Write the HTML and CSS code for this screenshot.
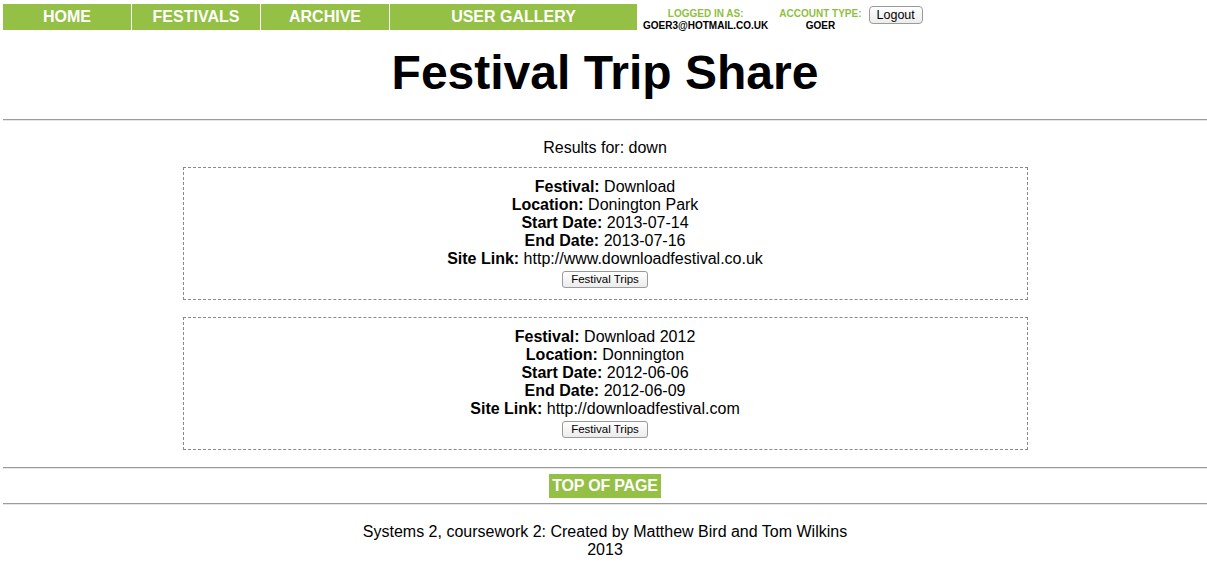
FILE: index.html
```html
<!DOCTYPE html>
<html>
<head>
<meta charset="utf-8">
<title>Festival Trip Share</title>
<link rel="stylesheet" href="styles.css">
</head>
<body>
<div class="header">
  <nav class="nav">
    <a class="nav-item w128" href="#">HOME</a>
    <a class="nav-item w128" href="#">FESTIVALS</a>
    <a class="nav-item w128" href="#">ARCHIVE</a>
    <a class="nav-item w247" href="#">USER GALLERY</a>
  </nav>
  <div class="info info-login">
    <div class="info-label">LOGGED IN AS:</div>
    <div class="info-value">GOER3@HOTMAIL.CO.UK</div>
  </div>
  <div class="info info-type">
    <div class="info-label">ACCOUNT TYPE:</div>
    <div class="info-value">GOER</div>
  </div>
  <button class="logout">Logout</button>
</div>

<h1 class="title">Festival Trip Share</h1>
<hr class="rule rule-top">

<p class="results">Results for: down</p>

<div class="card">
  <div class="line"><b>Festival:</b> Download</div>
  <div class="line"><b>Location:</b> Donington Park</div>
  <div class="line"><b>Start Date:</b> 2013-07-14</div>
  <div class="line"><b>End Date:</b> 2013-07-16</div>
  <div class="line"><b>Site Link:</b> http://www.downloadfestival.co.uk</div>
  <button class="trips">Festival Trips</button>
</div>

<div class="card">
  <div class="line"><b>Festival:</b> Download 2012</div>
  <div class="line"><b>Location:</b> Donnington</div>
  <div class="line"><b>Start Date:</b> 2012-06-06</div>
  <div class="line"><b>End Date:</b> 2012-06-09</div>
  <div class="line"><b>Site Link:</b> http://downloadfestival.com</div>
  <button class="trips">Festival Trips</button>
</div>

<hr class="rule rule-mid">
<div class="topwrap"><a class="top" href="#">TOP OF PAGE</a></div>
<hr class="rule rule-low">

<footer class="footer">
  <div>Systems 2, coursework 2: Created by Matthew Bird and Tom Wilkins</div>
  <div>2013</div>
</footer>
</body>
</html>
```

FILE: styles.css
```css
html, body {
  background: #fff;
}
body {
  margin: 4px 0 0 3px;
  font-family: "Liberation Sans", Arial, Helvetica, sans-serif;
  font-size: 16px;
  line-height: 18px;
  color: #000;
}

.header {
  display: flex;
  align-items: flex-start;
  height: 26px;
}
.nav {
  display: flex;
  gap: 1px;
}
.nav-item {
  display: block;
  height: 26px;
  line-height: 26px;
  background: #94c045;
  color: #fff;
  font-weight: bold;
  font-size: 16px;
  text-align: center;
  text-decoration: none;
}
.w128 { width: 128px; }
.w247 { width: 247px; }

.info {
  padding-top: 4px;
  text-align: center;
  font-size: 10px;
  line-height: 12px;
  font-weight: bold;
}
.info-login { margin-left: 6px; }
.info-type { margin-left: 11px; }
.info-label { color: #8fbf3f; }
.info-value { color: #000; }

.logout {
  margin: 2px 0 0 7px;
  height: 18px;
  padding: 0 7px;
  font-family: "Liberation Sans", Arial, sans-serif;
  font-size: 12.5px;
  line-height: 16px;
  border: 1px solid #9a9a9a;
  border-radius: 4px;
  background: linear-gradient(#ffffff, #ececec);
  color: #000;
}

.title {
  margin: 15px 0 0;
  font-size: 48px;
  line-height: 56px;
  font-weight: bold;
  text-align: center;
}

.rule {
  height: 0;
  border: 0;
  border-top: 1px solid #9c9c9c;
  border-bottom: 1px solid #e6e6e6;
  margin: 0;
}
.rule-top { margin-top: 18px; }
.rule-mid { margin-top: 17px; }
.rule-low { margin-top: 5px; }

.results {
  margin: 18px 0 10px;
  text-align: center;
}

.card {
  box-sizing: border-box;
  width: 845px;
  margin: 0 auto 17px;
  padding: 10px 0 11px;
  border: 1px dashed #8a8a8a;
  text-align: center;
}
.card:last-of-type { margin-bottom: 0; }
.line { line-height: 18px; }

.trips {
  display: block;
  margin: 3px auto 0;
  height: 17px;
  padding: 0 8px;
  font-family: "Liberation Sans", Arial, sans-serif;
  font-size: 11.5px;
  line-height: 15px;
  border: 1px solid #9a9a9a;
  border-radius: 3px;
  background: linear-gradient(#ffffff, #ececec);
  color: #000;
}

.topwrap {
  margin-top: 5px;
  text-align: center;
}
.top {
  display: inline-block;
  padding: 3px 3px;
  background: #94c045;
  color: #fff;
  font-weight: bold;
  text-decoration: none;
  letter-spacing: -0.2px;
}

.footer {
  margin-top: 18px;
  text-align: center;
}
```
